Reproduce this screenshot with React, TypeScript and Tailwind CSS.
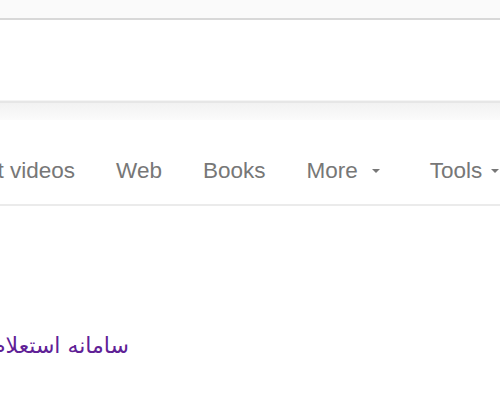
export default function App() {
  const tabs = ["Short videos", "Web", "Books"];

  return (
    <div className="h-[400px] w-[500px] overflow-hidden bg-white font-['Liberation_Sans',Arial,sans-serif]">
      {/* top bar */}
      <div className="h-[18px] bg-[#fafafa]" />
      <div className="h-[2px] bg-[#d8d8d8]" />

      {/* search area */}
      <div className="h-[80px] bg-white" />
      <div className="h-px bg-[#f4f4f4]" />
      <div className="h-[2px] bg-[#e6e6e6]" />
      <div className="h-[17px] bg-gradient-to-b from-[#f2f2f2] to-[#fbfbfb]" />

      {/* tabs */}
      <div className="flex h-[86px] items-center border-b-2 border-[#ebebeb] pt-[18px]">
        <div className="-ml-[50px] flex items-center whitespace-nowrap text-[22.5px] text-[#777]">
          {tabs.map((t) => (
            <span key={t} className="mr-[41px]">
              {t}
            </span>
          ))}
          <span className="flex items-center">
            More
            <span className="ml-[14px] mr-[50px] h-0 w-0 border-x-[4px] border-t-[4px] border-x-transparent border-t-[#777]" />
          </span>
          <span className="flex items-center">
            Tools
            <span className="ml-[9px] h-0 w-0 border-x-[4px] border-t-[4px] border-x-transparent border-t-[#777]" />
          </span>
        </div>
      </div>

      {/* result */}
      <div className="pt-[126px]">
        <div
          dir="rtl"
          className="w-[129px] overflow-hidden whitespace-nowrap text-right font-['DejaVu_Sans',sans-serif] text-[22px] leading-[28px] text-[#5f2196]"
        >
          سامانه استعلام نتایج
        </div>
      </div>
    </div>
  );
}
